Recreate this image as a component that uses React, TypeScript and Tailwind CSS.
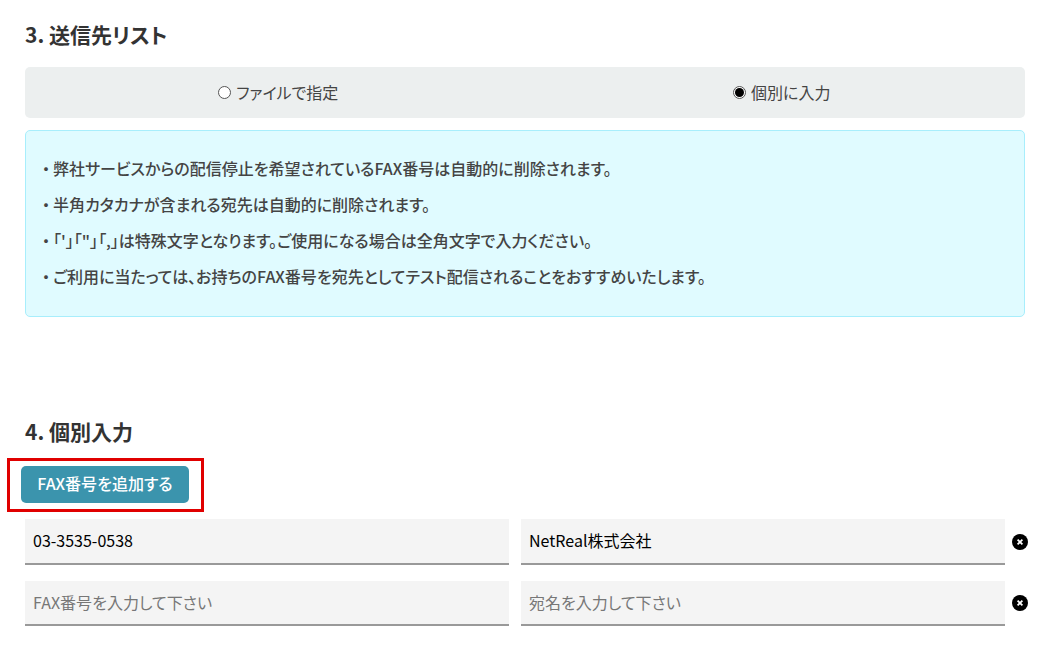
const notes = [
  '弊社サービスからの配信停止を希望されているFAX番号は自動的に削除されます。',
  '半角カタカナが含まれる宛先は自動的に削除されます。',
  '「\'」「"」「,」は特殊文字となります。ご使用になる場合は全角文字で入力ください。',
  'ご利用に当たっては、お持ちのFAX番号を宛先としてテスト配信されることをおすすめいたします。'
]

function RemoveIcon() {
  return (
    <svg width="16" height="16" viewBox="0 0 16 16" className="shrink-0">
      <circle cx="8" cy="8" r="8" fill="#000" />
      <path d="M5.6 5.6l4.8 4.8M10.4 5.6l-4.8 4.8" stroke="#fff" strokeWidth="1.8" />
    </svg>
  )
}

function Radio({ checked, label, className }: { checked?: boolean; label: string; className: string }) {
  return (
    <label className={`flex flex-1 items-center justify-center gap-[5px] ${className}`}>
      <span className="flex h-[13px] w-[13px] items-center justify-center rounded-full border border-[#555] bg-white">
        {checked && <span className="h-[9px] w-[9px] rounded-full bg-black" />}
      </span>
      <span className="pb-[2px]">{label}</span>
    </label>
  )
}

function Row({ fax, name }: { fax?: string; name?: string }) {
  return (
    <div className="flex items-center">
      <input
        readOnly
        value={fax ?? ''}
        placeholder="FAX番号を入力して下さい"
        className="h-[45.5px] w-[484px] shrink-0 border-b-2 border-[#999] bg-[#f4f4f4] px-2 pb-[1px] text-[16px] text-black outline-none placeholder:text-[#777]"
      />
      <input
        readOnly
        value={name ?? ''}
        placeholder="宛名を入力して下さい"
        className="ml-3 h-[45.5px] w-[484px] shrink-0 border-b-2 border-[#999] bg-[#f4f4f4] px-2 pb-[1px] text-[16px] text-black outline-none placeholder:text-[#777]"
      />
      <span className="ml-[7px] shrink-0">
        <RemoveIcon />
      </span>
    </div>
  )
}

export default function App() {
  return (
    <div className="h-[654px] w-[1050px] overflow-hidden bg-white px-[25px] pt-[19px] font-['Noto_Sans_CJK_JP',sans-serif] text-[#333] [font-feature-settings:'palt']">
      <h2 className="text-[21px] leading-[30px] font-bold">3. 送信先リスト</h2>

      <div className="mt-[18px] flex h-[51px] w-[1000px] rounded-[5px] bg-[#ecefef] text-[16px] text-[#444]">
        <Radio label="ファイルで指定" className="pl-[10px]" />
        <Radio checked label="個別に入力" className="pl-[17px]" />
      </div>

      <div className="mt-3 h-[187px] w-[1000px] rounded-[5px] border border-[#a8eefc] bg-[#e0fbff] px-[16px] pt-[19px] text-[16px] font-medium text-[#444]">
        {notes.map(note => (
          <p key={note} className="h-9 leading-9">
            <span className="mr-[3px]">・</span>
            {note}
          </p>
        ))}
      </div>

      <h2 className="mt-[99px] text-[21px] leading-[30px] font-bold">4. 個別入力</h2>

      <div className="relative mt-[20px]">
        <button className="ml-[-4px] h-[37px] w-[168px] rounded-[5px] bg-[#3b94ad] pb-[3px] text-[16px] font-medium text-white">
          FAX番号を追加する
        </button>
        <span className="absolute top-[-8px] left-[-18px] h-[54px] w-[197px] border-[3px] border-[#e00000]" />
      </div>

      <div className="mt-[16px] flex flex-col gap-[16px]">
        <Row fax="03-3535-0538" name="NetReal株式会社" />
        <Row />
      </div>
    </div>
  )
}
